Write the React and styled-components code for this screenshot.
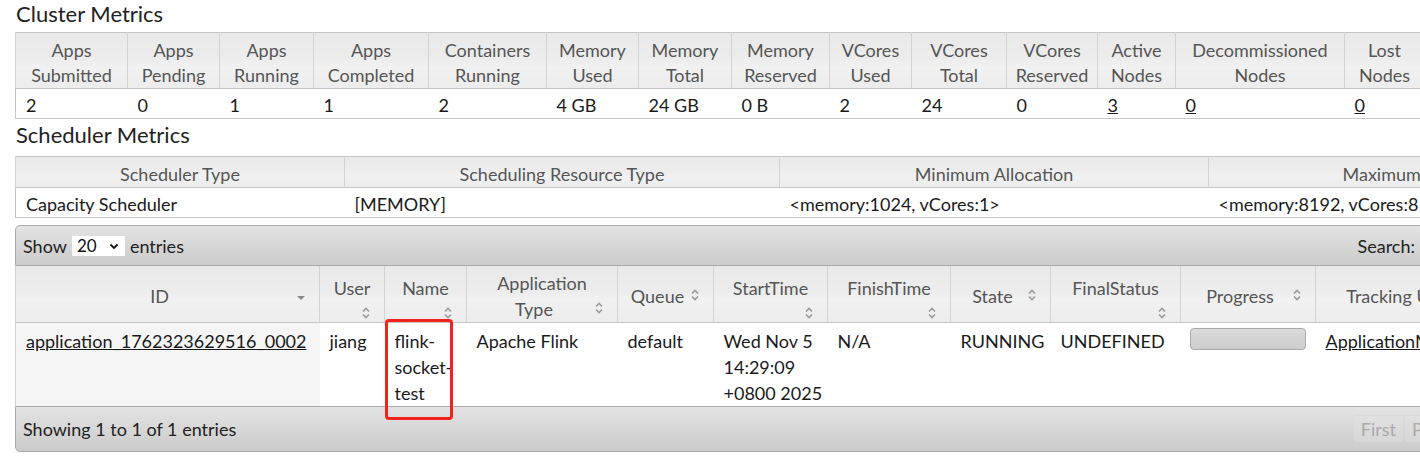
import React from 'react';
import styled, { createGlobalStyle } from 'styled-components';

const GlobalStyle = createGlobalStyle`
    html, body {
        margin: 0;
        padding: 0;
        overflow: hidden;
        background: #ffffff;
    }
    body {
        font-family: Lato, "Liberation Sans", sans-serif;
        font-size: 18px;
        color: #222;
    }
`;

const Page = styled.div`
    position: relative;
    padding-left: 15px;
    width: max-content;
`;

const SectionTitle = styled.h3`
    margin: ${props => (props.$first ? '0 0 4px' : '2px 0 7px')};
    font-size: 22px;
    line-height: 28px;
    font-weight: 400;
    color: #222;
    padding-left: 1px;
`;

const MetricsTable = styled.table`
    border-collapse: collapse;
    table-layout: fixed;
    width: ${props => props.$width}px;
    border: 1px solid #c6c6c6;
`;

const HeadCell = styled.th`
    background: linear-gradient(to bottom, #e9e9e9 0%, #ececec 45%, #f1f1f1 60%, #ececec 100%);
    color: #555;
    font-weight: 400;
    line-height: 25px;
    padding: 5px 8px 0;
    text-align: center;
    vertical-align: middle;
    border-left: 1px solid #d3d3d3;
    border-right: 1px solid #d3d3d3;
    border-bottom: 1px solid #c6c6c6;
    white-space: nowrap;
`;

const DataCell = styled.td`
    line-height: 25px;
    padding: 4px 10px 0;
    text-align: left;
    vertical-align: top;
    color: #1a1a1a;
    white-space: nowrap;
    background: #ffffff;
`;

const PlainLink = styled.a`
    color: #1a1a1a;
    text-decoration: underline;
`;

const Wrapper = styled.div`
    margin-top: 7px;
    width: ${props => props.$width}px;
`;

const Bar = styled.div`
    display: flex;
    align-items: center;
    justify-content: space-between;
    height: ${props => props.$height}px;
    box-sizing: border-box;
    padding: 0 7px;
    background: linear-gradient(to bottom, #e3e3e3 0%, #d6d6d6 55%, #cbcbcb 100%);
    border: 1px solid #aaaaaa;
    border-radius: ${props => (props.$top ? '5px 5px 0 0' : '0 0 5px 5px')};
    color: #222;
`;

const BarGroup = styled.div`
    display: flex;
    align-items: center;
    gap: 5px;
`;

const SelectBox = styled.span`
    display: inline-flex;
    align-items: center;
    justify-content: space-between;
    width: 53px;
    height: 20px;
    box-sizing: border-box;
    padding: 0 5px 0 5px;
    background: #fff;
    font-size: 17px;
    color: #111;
`;

const SearchInput = styled.span`
    display: inline-block;
    width: 210px;
    height: 24px;
    background: #fff;
    border: 1px solid #aaa;
`;

const AppsTable = styled.table`
    border-collapse: collapse;
    table-layout: fixed;
    width: ${props => props.$width}px;
    border-left: 1px solid #d3d3d3;
`;

const SortHeadCell = styled.th`
    background: linear-gradient(to bottom, #e9e9e9 0%, #ececec 45%, #f1f1f1 60%, #ececec 100%);
    color: #555;
    font-weight: 400;
    line-height: 26px;
    padding: 4px 10px 0;
    text-align: center;
    vertical-align: middle;
    border-right: 1px solid #d3d3d3;
    border-bottom: 1px solid #c6c6c6;
    white-space: nowrap;
`;

const SortIcon = styled.span`
    display: block;
    width: 16px;
    height: 16px;
    float: ${props => (props.$below ? 'none' : 'right')};
    margin-left: ${props => (props.$below ? 'auto' : '0')};
    margin-top: ${props => (props.$desc ? '3px' : '0')};
`;

const RowCell = styled.td`
    line-height: 26px;
    padding: 5px 10px 0;
    vertical-align: top;
    text-align: left;
    color: #1a1a1a;
    white-space: nowrap;
    background: ${props => (props.$sorted ? '#f5f5f5' : '#ffffff')};
`;

const Progress = styled.div`
    width: 114px;
    height: 20px;
    margin-top: 0;
    margin-left: -1px;
    border: 1px solid #aaaaaa;
    border-radius: 4px;
    background: linear-gradient(to bottom, #dcdcdc 0%, #d3d3d3 50%, #cdcdcd 100%);
`;

const PageButtons = styled.div`
    display: flex;
    align-items: center;
    margin-right: 9px;
`;

const PageButton = styled.span`
    display: inline-block;
    padding: 0 7px;
    line-height: 26px;
    border: 1px solid #d3d3d3;
    background: #e6e6e6;
    color: #555;
    opacity: ${props => (props.$disabled ? 0.35 : 1)};
    border-radius: ${props => props.$radius || '0'};
    margin-right: ${props => (props.$gap ? '6px' : '0')};
`;

const Highlight = styled.div`
    position: absolute;
    left: 385px;
    top: 319px;
    width: 68px;
    height: 101px;
    box-sizing: border-box;
    border: 3px solid #f2231c;
    border-radius: 4px;
    pointer-events: none;
`;

const clusterCols = [
    { w: 112, head: ['Apps', 'Submitted'], val: '2' },
    { w: 92, head: ['Apps', 'Pending'], val: '0' },
    { w: 94, head: ['Apps', 'Running'], val: '1' },
    { w: 115, head: ['Apps', 'Completed'], val: '1' },
    { w: 118, head: ['Containers', 'Running'], val: '2' },
    { w: 92, head: ['Memory', 'Used'], val: '4 GB' },
    { w: 93, head: ['Memory', 'Total'], val: '24 GB' },
    { w: 98, head: ['Memory', 'Reserved'], val: '0 B' },
    { w: 82, head: ['VCores', 'Used'], val: '2' },
    { w: 95, head: ['VCores', 'Total'], val: '24' },
    { w: 91, head: ['VCores', 'Reserved'], val: '0' },
    { w: 78, head: ['Active', 'Nodes'], val: '3', link: true },
    { w: 169, head: ['Decommissioned', 'Nodes'], val: '0', link: true },
    { w: 80, head: ['Lost', 'Nodes'], val: '0', link: true },
    { w: 100, head: ['Unhealthy', 'Nodes'], val: '0', link: true },
    { w: 100, head: ['Rebooted', 'Nodes'], val: '0', link: true },
];

const schedulerCols = [
    { w: 329, head: 'Scheduler Type', val: 'Capacity Scheduler' },
    { w: 435, head: 'Scheduling Resource Type', val: '[MEMORY]' },
    { w: 429, head: 'Minimum Allocation', val: '<memory:1024, vCores:1>' },
    { w: 430, head: 'Maximum Allocation', val: '<memory:8192, vCores:8>' },
];

const appCols = [
    { w: 304, head: ['ID'], icon: 'desc', sorted: true, cell: ['application_1762323629516_0002'], link: true },
    { w: 65, head: ['User'], icon: 'below', cell: ['jiang'] },
    { w: 82, head: ['Name'], icon: 'below', cell: ['flink-', 'socket-', 'test'] },
    { w: 151, head: ['Application', 'Type'], icon: 'inline', cell: ['Apache Flink'] },
    { w: 96, head: ['Queue'], icon: 'inline', cell: ['default'] },
    { w: 114, head: ['StartTime'], icon: 'below', cell: ['Wed Nov 5', '14:29:09', '+0800 2025'] },
    { w: 123, head: ['FinishTime'], icon: 'below', cell: ['N/A'] },
    { w: 100, head: ['State'], icon: 'inline', cell: ['RUNNING'] },
    { w: 130, head: ['FinalStatus'], icon: 'below', cell: ['UNDEFINED'] },
    { w: 135, head: ['Progress'], icon: 'inline', progress: true },
    { w: 166, head: ['Tracking UI'], icon: 'inline', cell: ['ApplicationMaster'], link: true },
    { w: 159, head: ['Blacklisted', 'Nodes'], icon: 'inline', cell: [''] },
];

const sum = cols => cols.reduce((acc, c) => acc + c.w, 0);

const Lines = ({ lines }) =>
    lines.map((line, i) => (
        <React.Fragment key={i}>
            {i > 0 && <br />}
            {line}
        </React.Fragment>
    ));

const Carat = () => (
    <svg width="16" height="16" viewBox="0 0 16 16">
        <path d="M5 6.5 L8 3.5 L11 6.5 M5 9.5 L8 12.5 L11 9.5" fill="none" stroke="#9a9a9a" strokeWidth="1.6" />
    </svg>
);

const TriangleDown = () => (
    <svg width="16" height="16" viewBox="0 0 16 16">
        <path d="M4 6 L12 6 L8 10 Z" fill="#8a8a8a" />
    </svg>
);

const Chevron = () => (
    <svg width="12" height="12" viewBox="0 0 12 12">
        <path d="M2.5 4.5 L6 8 L9.5 4.5" fill="none" stroke="#111" strokeWidth="1.8" />
    </svg>
);

const App = () => {
    return (
        <Page>
            <GlobalStyle />
            <SectionTitle $first>Cluster Metrics</SectionTitle>
            <MetricsTable $width={sum(clusterCols)}>
                <colgroup>
                    {clusterCols.map((c, i) => <col key={i} style={{ width: c.w }} />)}
                </colgroup>
                <thead>
                    <tr>
                        {clusterCols.map((c, i) => (
                            <HeadCell key={i}><Lines lines={c.head} /></HeadCell>
                        ))}
                    </tr>
                </thead>
                <tbody>
                    <tr>
                        {clusterCols.map((c, i) => (
                            <DataCell key={i}>
                                {c.link ? <PlainLink href="#">{c.val}</PlainLink> : c.val}
                            </DataCell>
                        ))}
                    </tr>
                </tbody>
            </MetricsTable>

            <SectionTitle>Scheduler Metrics</SectionTitle>
            <MetricsTable $width={sum(schedulerCols)}>
                <colgroup>
                    {schedulerCols.map((c, i) => <col key={i} style={{ width: c.w }} />)}
                </colgroup>
                <thead>
                    <tr>
                        {schedulerCols.map((c, i) => <HeadCell key={i}>{c.head}</HeadCell>)}
                    </tr>
                </thead>
                <tbody>
                    <tr>
                        {schedulerCols.map((c, i) => <DataCell key={i}>{c.val}</DataCell>)}
                    </tr>
                </tbody>
            </MetricsTable>

            <Wrapper $width={sum(appCols)}>
                <Bar $top $height={41}>
                    <BarGroup>
                        Show
                        <SelectBox>20 <Chevron /></SelectBox>
                        entries
                    </BarGroup>
                    <BarGroup>
                        Search:
                        <SearchInput />
                    </BarGroup>
                </Bar>
                <AppsTable $width={sum(appCols)}>
                    <colgroup>
                        {appCols.map((c, i) => <col key={i} style={{ width: c.w }} />)}
                    </colgroup>
                    <thead>
                        <tr>
                            {appCols.map((c, i) => (
                                <SortHeadCell key={i}>
                                    <Lines lines={c.head} />
                                    <SortIcon $below={c.icon === 'below'} $desc={c.icon === 'desc'}>
                                        {c.icon === 'desc' ? <TriangleDown /> : <Carat />}
                                    </SortIcon>
                                </SortHeadCell>
                            ))}
                        </tr>
                    </thead>
                    <tbody>
                        <tr>
                            {appCols.map((c, i) => (
                                <RowCell key={i} $sorted={c.sorted}>
                                    {c.progress ? (
                                        <Progress />
                                    ) : c.link ? (
                                        <PlainLink href="#"><Lines lines={c.cell} /></PlainLink>
                                    ) : (
                                        <Lines lines={c.cell} />
                                    )}
                                </RowCell>
                            ))}
                        </tr>
                    </tbody>
                </AppsTable>
                <Bar $height={46}>
                    <span>Showing 1 to 1 of 1 entries</span>
                    <PageButtons>
                        <PageButton $disabled $radius="4px 0 0 4px">First</PageButton>
                        <PageButton $disabled $gap $radius="0 4px 4px 0">Previous</PageButton>
                        <PageButton $radius="4px">1</PageButton>
                        <PageButton $disabled $radius="4px 0 0 4px">Next</PageButton>
                        <PageButton $disabled $radius="0 4px 4px 0">Last</PageButton>
                    </PageButtons>
                </Bar>
            </Wrapper>

            <Highlight />
        </Page>
    );
};

export default App;
